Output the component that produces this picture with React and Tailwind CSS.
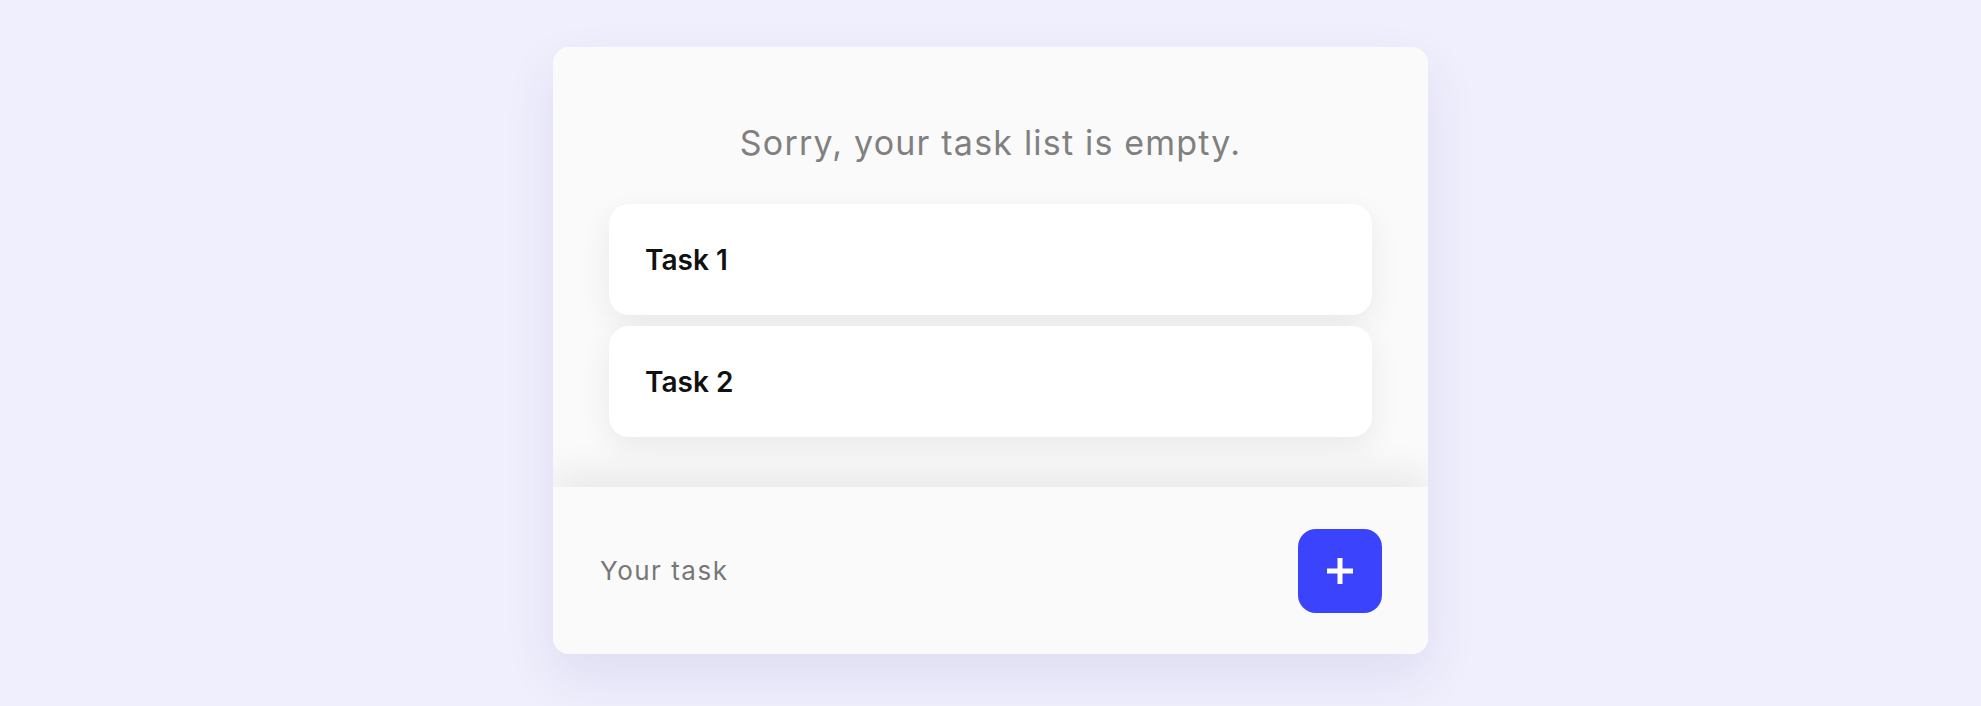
import { useState } from "react";

const TASKS = ["Task 1", "Task 2"];

function PlusIcon() {
  return (
    <svg width="28" height="28" viewBox="0 0 28 28" fill="none">
      <path d="M14 1v26M1 14h26" stroke="white" strokeWidth="5" />
    </svg>
  );
}

export default function App() {
  const [value, setValue] = useState("");

  return (
    <div
      className="min-h-screen bg-[#f0effd] flex justify-center pt-[47px]"
      style={{ fontFamily: "Inter, 'Noto Sans', sans-serif" }}
    >
      <div className="w-[875px] h-[607px] rounded-[16px] overflow-hidden bg-[#fafafa] flex flex-col shadow-[0_22px_50px_rgba(70,60,150,0.10)]">
        {/* list area */}
        <div className="flex-1 flex flex-col px-[56px] pt-[71px]">
          <h1 className="text-center text-[34px] leading-[50px] tracking-[1.2px] font-normal text-[#808080]">
            Sorry, your task list is empty.
          </h1>
          <ul className="mt-[36px] flex flex-col gap-[11px]">
            {TASKS.map((t) => (
              <li
                key={t}
                className="h-[111px] bg-white rounded-[20px] flex items-center px-[36px] shadow-[0_10px_30px_rgba(0,0,0,0.07)]"
              >
                <span className="text-[28px] font-semibold text-[#111111]">{t}</span>
              </li>
            ))}
          </ul>
        </div>

        {/* add task */}
        <div className="relative z-10 h-[167px] bg-[#fafafa] flex items-center justify-between pl-[47px] pr-[46px] shadow-[0_-14px_34px_rgba(0,0,0,0.07)]">
          <input
            value={value}
            onChange={(e) => setValue(e.target.value)}
            placeholder="Your task"
            className="flex-1 bg-transparent outline-none text-[26px] tracking-[1.5px] text-[#555] placeholder:text-[#777777]"
          />
          <button className="w-[84px] h-[84px] rounded-[18px] bg-[#3c43fc] grid place-items-center">
            <PlusIcon />
          </button>
        </div>
      </div>
    </div>
  );
}
